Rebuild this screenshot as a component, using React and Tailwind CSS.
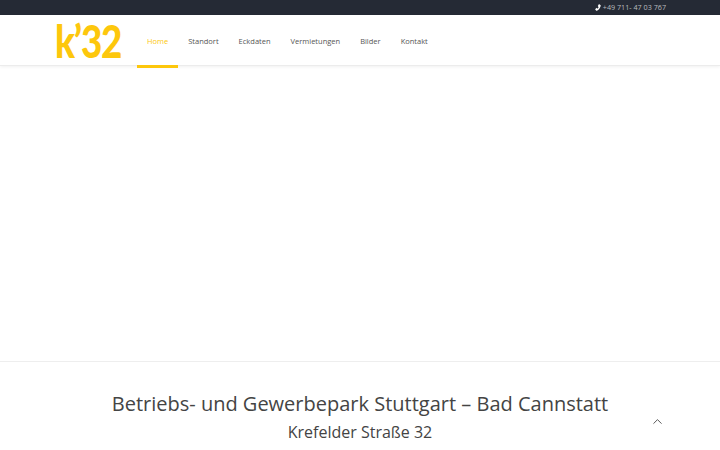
import React from "react";
import { ChevronUp } from "lucide-react";

const navItems = ["Home", "Standort", "Eckdaten", "Vermietungen", "Bilder", "Kontakt"];

const App = () => {
  return (
    <div className="relative h-[450px] w-[720px] overflow-hidden bg-white font-['Open_Sans',sans-serif]">
      {/* TOP BAR */}
      <div className="flex h-[15px] items-center justify-end bg-[#252a35] pr-[54px]">
        <svg width="7" height="7" viewBox="0 0 24 24" className="mr-[2px] text-white" fill="currentColor">
          <path d="M23 4 17 0c-2 4-3 6-4 7l3 4c-1 2-3 4-5 5l-3-3-4 6 4 4C14 23 23 12 23 4z" />
        </svg>
        <span className="text-[7.2px] leading-none text-[#b9bbbf]">+49 711- 47 03 767</span>
      </div>

      {/* HEADER */}
      <header className="flex h-[51px] items-start border-b border-[#ececec] pl-[55px] shadow-[0_1px_3px_rgba(0,0,0,0.06)]">
        <div className="w-[82px] origin-left scale-x-[0.8] font-['Lato',sans-serif] text-[46px] leading-[51px] font-black tracking-[-1.5px] whitespace-nowrap text-[#fdc70c]">
          k’32
        </div>
        <nav className="flex">
          {navItems.map((item, i) => (
            <a
              key={item}
              href="#"
              className={`flex h-[53px] items-center border-b-[3px] px-[10px] pt-[3px] text-[7.5px] ${
                i === 0 ? "border-[#fdc70c] text-[#fdc70c]" : "border-transparent text-[#555]"
              }`}
            >
              {item}
            </a>
          ))}
        </nav>
      </header>

      {/* HERO + TITLE */}
      <div className="h-[296px] border-b border-[#eeeeee]" />
      <section className="pt-[27px] text-center text-[#444]">
        <h1 className="text-[20px] leading-[30px]">Betriebs- und Gewerbepark Stuttgart – Bad Cannstatt</h1>
        <h2 className="text-[16px] leading-[26px]">Krefelder Straße 32</h2>
      </section>

      <ChevronUp size={15} strokeWidth={1.3} className="absolute top-[414px] left-[650px] text-[#333]" />
    </div>
  );
};

export default App;
